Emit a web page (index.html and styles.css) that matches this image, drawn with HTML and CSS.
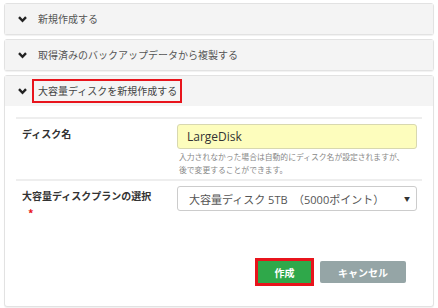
FILE: index.html
```html
<!DOCTYPE html>
<html lang="ja">
<head>
<meta charset="utf-8">
<link rel="stylesheet" href="styles.css">
</head>
<body>
<div class="panel">
  <div class="panel-head">
    <svg class="chev" width="9" height="7" viewBox="0 0 9 7"><path d="M1 1.2 L4.5 4.8 L8 1.2" fill="none" stroke="#222" stroke-width="2.4"/></svg>
    <span class="title">新規作成する</span>
  </div>
</div>
<div class="panel">
  <div class="panel-head">
    <svg class="chev" width="9" height="7" viewBox="0 0 9 7"><path d="M1 1.2 L4.5 4.8 L8 1.2" fill="none" stroke="#222" stroke-width="2.4"/></svg>
    <span class="title">取得済みのバックアップデータから複製する</span>
  </div>
</div>
<div class="panel open">
  <div class="panel-head">
    <svg class="chev" width="9" height="7" viewBox="0 0 9 7"><path d="M1 1.2 L4.5 4.8 L8 1.2" fill="none" stroke="#222" stroke-width="2.4"/></svg>
    <span class="title boxed">大容量ディスクを新規作成する</span>
  </div>
  <div class="panel-body">
    <div class="row">
      <div class="label">ディスク名</div>
      <div class="field">
        <div class="input">LargeDisk</div>
        <div class="help">入力されなかった場合は自動的にディスク名が設定されますが、<br>後で変更することができます。</div>
      </div>
    </div>
    <div class="row last">
      <div class="label">大容量ディスクプランの選択<div class="req">*</div></div>
      <div class="field">
        <div class="select"><span>大容量ディスク 5TB　（5000ポイント）</span><span class="arrow">▼</span></div>
      </div>
    </div>
    <div class="actions">
      <span class="hl"><button class="btn ok">作成</button></span>
      <button class="btn cancel">キャンセル</button>
    </div>
  </div>
</div>
</body>
</html>
```
FILE: styles.css
```css
* { box-sizing: border-box; }
html, body { margin: 0; padding: 0; background: #fff; }
body {
  padding: 3px 4px 0 4px;
  font-family: "Open Sans", "Noto Sans CJK JP", sans-serif;
  color: #555;
  width: 438px;
  height: 308px;
  overflow: hidden;
}
.panel {
  border: 1px solid #e2e2e2;
  border-radius: 3px;
  background: #f4f4f4;
  box-shadow: 0 1px 1px rgba(0,0,0,0.06);
  margin-bottom: 4px;
}
.panel.open { background: #fff; }
.panel-head {
  height: 30px;
  display: flex;
  align-items: center;
  padding-left: 13px;
  background: #f4f4f4;
}
.chev { margin-right: 11px; flex: none; }
.title {
  font-family: "Noto Sans CJK JP", sans-serif;
  font-size: 10px;
  color: #555;
  line-height: 14px;
}
.title.boxed {
  border: 2px solid #e8141c;
  padding: 3px 3px 3px 4px;
  margin-left: -6px;
  color: #444;
}
.panel-body {
  padding: 11px 11px 0 11px;
  height: 200px;
}
.row {
  display: grid;
  grid-template-columns: 155px 1fr;
  border-top: 2px solid #eeeeee;
  padding: 5px 5px 0 6px;
  height: 62px;
}
.row.last { height: 60px; }
.label {
  font-family: "Noto Sans CJK JP", sans-serif;
  font-size: 10px;
  font-weight: bold;
  color: #333;
  padding-top: 2px;
}
.req {
  color: #e8141c;
  font-size: 11px;
  padding-left: 6px;
  line-height: 12px;
  margin-top: 4px;
}
.input {
  height: 25px;
  background: #fdfdbd;
  border: 1px solid #d8d8b0;
  border-radius: 3px;
  font-size: 12px;
  color: #333;
  line-height: 23px;
  padding-left: 9px;
}
.help {
  font-family: "Noto Sans CJK JP", sans-serif;
  font-size: 7.8px;
  color: #888;
  line-height: 13px;
  padding-left: 2px;
  margin-top: 1px;
}
.select {
  height: 25px;
  border: 1px solid #ccc;
  border-radius: 3px;
  display: flex;
  align-items: center;
  justify-content: space-between;
  padding: 0 6px 0 11px;
  font-family: "Open Sans", "Noto Sans CJK JP", sans-serif;
  font-size: 11px;
  color: #555;
}
.arrow { font-size: 6px; color: #333; }
.actions {
  display: flex;
  gap: 6px;
  align-items: center;
  padding-left: 239px;
  margin-top: 19px;
}
.hl {
  border: 3px solid #e8141c;
  display: inline-flex;
}
.btn {
  border: 0;
  border-radius: 2px;
  font-family: "Noto Sans CJK JP", sans-serif;
  font-weight: bold;
  font-size: 10px;
  color: #fff;
  height: 22px;
  padding: 0;
}
.ok { background: #2fa84a; width: 53px; border-radius: 0; }
.cancel { background: #95a5a6; width: 86px; margin-left: 0; }
```
